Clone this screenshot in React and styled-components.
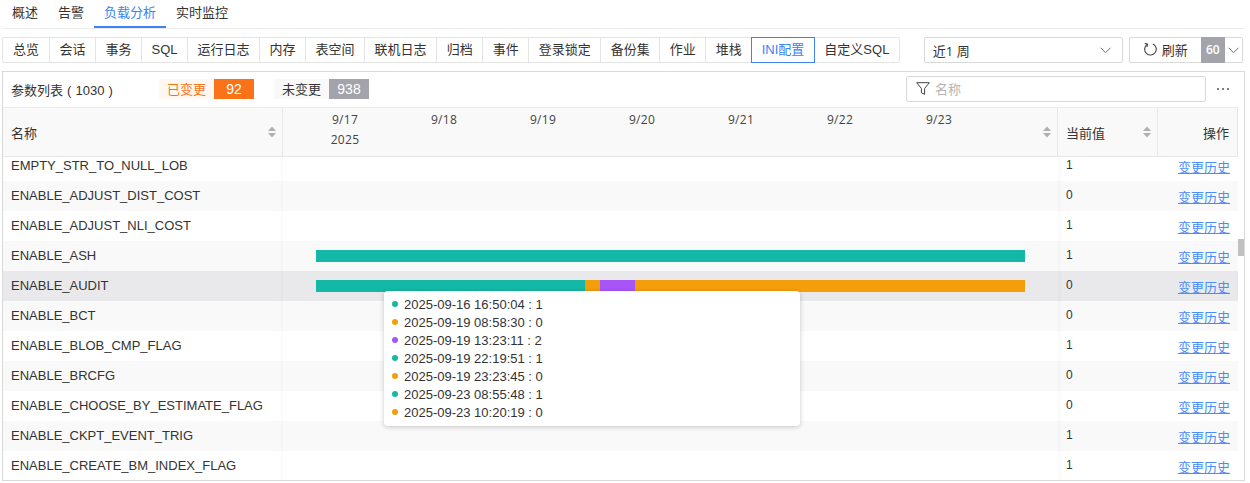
import styled, { createGlobalStyle } from "styled-components";

const GlobalStyle = createGlobalStyle`
  html, body {
    margin: 0;
    padding: 0;
    background: #fff;
    overflow: hidden;
  }

  * {
    box-sizing: border-box;
  }

  #root {
    height: 483px;
    overflow: hidden;
    color: #333;
    font-family: "Open Sans", "Noto Sans CJK SC", sans-serif;
    font-size: 13px;
  }
`;

const TEAL = "#14b8a6";
const ORANGE = "#f59e0b";
const PURPLE = "#a855f7";

const Page = styled.div`
  width: 1250px;
  height: 483px;
  padding: 0 5px 0 2px;
`;

const TabBar = styled.div`
  display: flex;
  height: 29px;
  border-bottom: 1px solid #ececec;
`;

const Tab = styled.div`
  height: 28px;
  padding: 0 10px;
  line-height: 24px;
  color: ${(p) => (p.$active ? "#3b82f6" : "#333")};
  border-bottom: 2px solid ${(p) => (p.$active ? "#3b82f6" : "transparent")};
`;

const Toolbar = styled.div`
  display: flex;
  align-items: center;
  height: 26px;
  margin-top: 8px;
`;

const Segments = styled.div`
  display: flex;
  height: 26px;
  font-family: "Liberation Sans", "Noto Sans CJK SC", sans-serif;
`;

const Segment = styled.div`
  height: 26px;
  padding: 0 9.5px;
  line-height: 24px;
  margin-left: -1px;
  white-space: nowrap;
  position: relative;
  z-index: ${(p) => (p.$active ? 1 : 0)};
  color: ${(p) => (p.$active ? "#3b82f6" : "#333")};
  border: 1px solid ${(p) => (p.$active ? "#3b82f6" : "#e4e4e4")};

  &:first-child {
    margin-left: 0;
    border-radius: 2px 0 0 2px;
    padding: 0 10px;
  }

  &:last-child {
    border-radius: 0 2px 2px 0;
  }
`;

const RangeSelect = styled.div`
  display: flex;
  align-items: center;
  justify-content: space-between;
  width: 199px;
  height: 26px;
  margin-left: 24px;
  padding: 0 11px 0 8px;
  border: 1px solid #d9d9d9;
  border-radius: 2px;
`;

const RefreshGroup = styled.div`
  display: flex;
  height: 26px;
  margin-left: 6px;
`;

const RefreshButton = styled.div`
  display: flex;
  align-items: center;
  gap: 5px;
  width: 72px;
  padding: 0 0 2px 13px;
  border: 1px solid #d9d9d9;
  border-right: 0;
  border-radius: 2px 0 0 2px;
`;

const Countdown = styled.div`
  width: 24px;
  background: #a3a3ab;
  color: #fff;
  font-size: 12px;
  font-weight: 600;
  line-height: 25px;
  text-align: center;
`;

const Dropdown = styled.div`
  display: flex;
  align-items: center;
  justify-content: center;
  width: 18px;
  border: 1px solid #d9d9d9;
  border-left: 0;
  border-radius: 0 2px 2px 0;
`;

const Panel = styled.div`
  position: relative;
  height: 410px;
  margin-top: 8px;
  border: 1px solid #d9d9d9;
  overflow: hidden;
`;

const PanelHead = styled.div`
  display: flex;
  align-items: center;
  height: 35px;
  padding: 0 0 1px 8px;
`;

const Title = styled.div`
  width: 148px;
  font-family: "Liberation Sans", "Noto Sans CJK SC", sans-serif;
  word-spacing: 0.5px;
`;

const StatLabel = styled.div`
  width: 55px;
  height: 20px;
  line-height: 20px;
  text-align: center;
  color: ${(p) => (p.$changed ? "#f97316" : "#333")};
  background: ${(p) => (p.$changed ? "#fff7f0" : "#f9f9f9")};
`;

const StatCount = styled.div`
  width: 40px;
  height: 20px;
  margin-right: 20px;
  font-family: "Liberation Sans", sans-serif;
  font-size: 14px;
  line-height: 20px;
  text-align: center;
  color: #fff;
  background: ${(p) => (p.$changed ? "#fb7318" : "#a3a3ab")};
`;

const FilterBox = styled.div`
  display: flex;
  align-items: center;
  gap: 5px;
  width: 300px;
  height: 26px;
  margin-left: auto;
  padding: 0 0 1px 9px;
  color: #b5b5b5;
  border: 1px solid #d9d9d9;
  border-radius: 2px;
`;

const More = styled.div`
  display: flex;
  gap: 3px;
  width: 38px;
  padding-left: 11px;

  i {
    width: 2px;
    height: 2px;
    border-radius: 50%;
    background: #555;
  }
`;

const HeadRow = styled.div`
  display: flex;
  height: 50px;
  margin-right: 6px;
  background: #f9f9f9;
  border-top: 1px solid #ececec;
  border-bottom: 1px solid #e8e8e8;
`;

const HeadCell = styled.div`
  position: relative;
  display: flex;
  align-items: center;
  width: ${(p) => p.$w}px;
  flex: none;
  padding: 0 8px;
  justify-content: ${(p) => (p.$right ? "flex-end" : "flex-start")};
  border-right: 1px solid #e8e8e8;
`;

const SortIcon = styled.svg`
  position: absolute;
  right: 6px;
  top: 18px;
`;

const Ticks = styled.div`
  display: flex;
  width: 775px;
  flex: none;
  padding: 2px 0 0 12.5px;
  position: relative;
  border-right: 1px solid #e8e8e8;
`;

const Tick = styled.div`
  width: 99px;
  line-height: 20px;
  font-size: 12px;
  letter-spacing: 0.3px;
  text-align: center;
  color: #444;
`;

const Body = styled.div`
  display: flex;
  height: 324px;
  overflow: hidden;
`;

const Rows = styled.div`
  width: 1235px;
  margin-top: -6px;
`;

const Row = styled.div`
  display: flex;
  height: 30px;
  font-family: "Liberation Sans", "Noto Sans CJK SC", sans-serif;
  background: ${(p) => (p.$hover ? "#e9e9ec" : p.$alt ? "#f9f9f9" : "#fff")};
`;

const NameCell = styled.div`
  width: 280px;
  flex: none;
  padding-left: 8px;
  line-height: 29px;
  box-shadow: inset -4px 0 4px -3px rgba(0, 0, 0, 0.03);
`;

const BarCell = styled.div`
  display: flex;
  width: 775px;
  flex: none;
  padding: 9px 0 9px 33px;
`;

const Seg = styled.div`
  height: 12px;
  background: ${(p) => p.$color};
`;

const ValueCell = styled.div`
  width: 100px;
  flex: none;
  padding-left: 8px;
  font-size: 12px;
  line-height: 28px;
  box-shadow: inset 4px 0 4px -3px rgba(0, 0, 0, 0.04);
`;

const ActionCell = styled.div`
  width: 80px;
  flex: none;
  padding: 0 8px 0 0;
  text-align: right;
  line-height: 32px;
`;

const HistoryLink = styled.span`
  font-family: "Noto Sans CJK SC", sans-serif;
  color: #4b8df8;
  text-decoration: underline;
`;

const Track = styled.div`
  width: 6px;
  flex: none;
`;

const Thumb = styled.div`
  width: 6px;
  height: 17px;
  margin-top: 82px;
  background: #c1c1c1;
`;

const Tooltip = styled.div`
  position: absolute;
  left: 381px;
  top: 219px;
  width: 416px;
  height: 135px;
  padding: 4px 8px;
  background: #fff;
  border-radius: 4px;
  box-shadow: 0 1px 5px rgba(0, 0, 0, 0.22);
  font-family: "Liberation Sans", sans-serif;
`;

const TipLine = styled.div`
  display: flex;
  align-items: center;
  gap: 6px;
  height: 18px;
  white-space: nowrap;
`;

const Dot = styled.span`
  width: 6px;
  height: 6px;
  border-radius: 50%;
  background: ${(p) => p.$color};
`;

const Sort = () => (
  <SortIcon width="8" height="12" viewBox="0 0 8 12">
    <path d="M4 0.5 L8 5 H0 Z" fill="#b0b0b0" />
    <path d="M4 11.5 L8 7 H0 Z" fill="#b0b0b0" />
  </SortIcon>
);

const Chevron = ({ size = 11 }) => (
  <svg width={size} height={size * 0.6} viewBox="0 0 11 6.6">
    <path d="M0.5 0.7 L5.5 5.7 L10.5 0.7" fill="none" stroke="#6b7280" strokeWidth="1" />
  </svg>
);

const RefreshIcon = () => (
  <svg width="14" height="14" viewBox="0 0 14 14">
    <path
      d="M4.2 2.4 A5.8 5.8 0 1 0 9.8 1.9"
      fill="none"
      stroke="#444"
      strokeWidth="1.1"
    />
    <path d="M1.8 1.4 L4.6 2.2 L3.9 5" fill="none" stroke="#444" strokeWidth="1.1" />
  </svg>
);

const FunnelIcon = () => (
  <svg width="14" height="13" viewBox="0 0 14 13">
    <path
      d="M0.7 0.7 H13.3 L8.6 6.5 V12.3 L5.4 10.8 V6.5 Z"
      fill="none"
      stroke="#444"
      strokeWidth="1"
      strokeLinejoin="round"
    />
  </svg>
);

const tabs = ["概述", "告警", "负载分析", "实时监控"];
const segments = [
  "总览", "会话", "事务", "SQL", "运行日志", "内存", "表空间", "联机日志",
  "归档", "事件", "登录锁定", "备份集", "作业", "堆栈", "INI配置", "自定义SQL",
];
const ticks = ["9/17", "9/18", "9/19", "9/20", "9/21", "9/22", "9/23"];

const rows = [
  { name: "EMPTY_STR_TO_NULL_LOB", value: 1 },
  { name: "ENABLE_ADJUST_DIST_COST", value: 0 },
  { name: "ENABLE_ADJUST_NLI_COST", value: 1 },
  { name: "ENABLE_ASH", value: 1, segs: [[709, TEAL]] },
  {
    name: "ENABLE_AUDIT",
    value: 0,
    hover: true,
    segs: [[269, TEAL], [15, ORANGE], [35, PURPLE], [390, ORANGE]],
  },
  { name: "ENABLE_BCT", value: 0 },
  { name: "ENABLE_BLOB_CMP_FLAG", value: 1 },
  { name: "ENABLE_BRCFG", value: 0 },
  { name: "ENABLE_CHOOSE_BY_ESTIMATE_FLAG", value: 0 },
  { name: "ENABLE_CKPT_EVENT_TRIG", value: 1 },
  { name: "ENABLE_CREATE_BM_INDEX_FLAG", value: 1 },
];

const history = [
  ["2025-09-16 16:50:04 : 1", TEAL],
  ["2025-09-19 08:58:30 : 0", ORANGE],
  ["2025-09-19 13:23:11 : 2", PURPLE],
  ["2025-09-19 22:19:51 : 1", TEAL],
  ["2025-09-19 23:23:45 : 0", ORANGE],
  ["2025-09-23 08:55:48 : 1", TEAL],
  ["2025-09-23 10:20:19 : 0", ORANGE],
];

export default function App() {
  return (
    <Page>
      <GlobalStyle />
      <TabBar>
        {tabs.map((t) => (
          <Tab key={t} $active={t === "负载分析"}>
            {t}
          </Tab>
        ))}
      </TabBar>

      <Toolbar>
        <Segments>
          {segments.map((s) => (
            <Segment key={s} $active={s === "INI配置"}>
              {s}
            </Segment>
          ))}
        </Segments>
        <RangeSelect>
          <span>近1 周</span>
          <Chevron />
        </RangeSelect>
        <RefreshGroup>
          <RefreshButton>
            <RefreshIcon />
            刷新
          </RefreshButton>
          <Countdown>60</Countdown>
          <Dropdown>
            <Chevron />
          </Dropdown>
        </RefreshGroup>
      </Toolbar>

      <Panel>
        <PanelHead>
          <Title>参数列表 ( 1030 )</Title>
          <StatLabel $changed>已变更</StatLabel>
          <StatCount $changed>92</StatCount>
          <StatLabel>未变更</StatLabel>
          <StatCount>938</StatCount>
          <FilterBox>
            <FunnelIcon />
            名称
          </FilterBox>
          <More>
            <i />
            <i />
            <i />
          </More>
        </PanelHead>

        <HeadRow>
          <HeadCell $w={280}>
            名称
            <Sort />
          </HeadCell>
          <Ticks>
            {ticks.map((t, i) => (
              <Tick key={t}>
                {t}
                {i === 0 && <div>2025</div>}
              </Tick>
            ))}
            <Sort />
          </Ticks>
          <HeadCell $w={100}>
            当前值
            <Sort />
          </HeadCell>
          <HeadCell $w={80} $right>
            操作
          </HeadCell>
        </HeadRow>

        <Body>
          <Rows>
            {rows.map((r, i) => (
              <Row key={r.name} $alt={i % 2 === 1} $hover={r.hover}>
                <NameCell>{r.name}</NameCell>
                <BarCell>
                  {(r.segs || []).map(([w, color], j) => (
                    <Seg key={j} $color={color} style={{ width: w }} />
                  ))}
                </BarCell>
                <ValueCell>{r.value}</ValueCell>
                <ActionCell>
                  <HistoryLink>变更历史</HistoryLink>
                </ActionCell>
              </Row>
            ))}
          </Rows>
          <Track>
            <Thumb />
          </Track>
        </Body>

        <Tooltip>
          {history.map(([text, color]) => (
            <TipLine key={text}>
              <Dot $color={color} />
              {text}
            </TipLine>
          ))}
        </Tooltip>
      </Panel>
    </Page>
  );
}
